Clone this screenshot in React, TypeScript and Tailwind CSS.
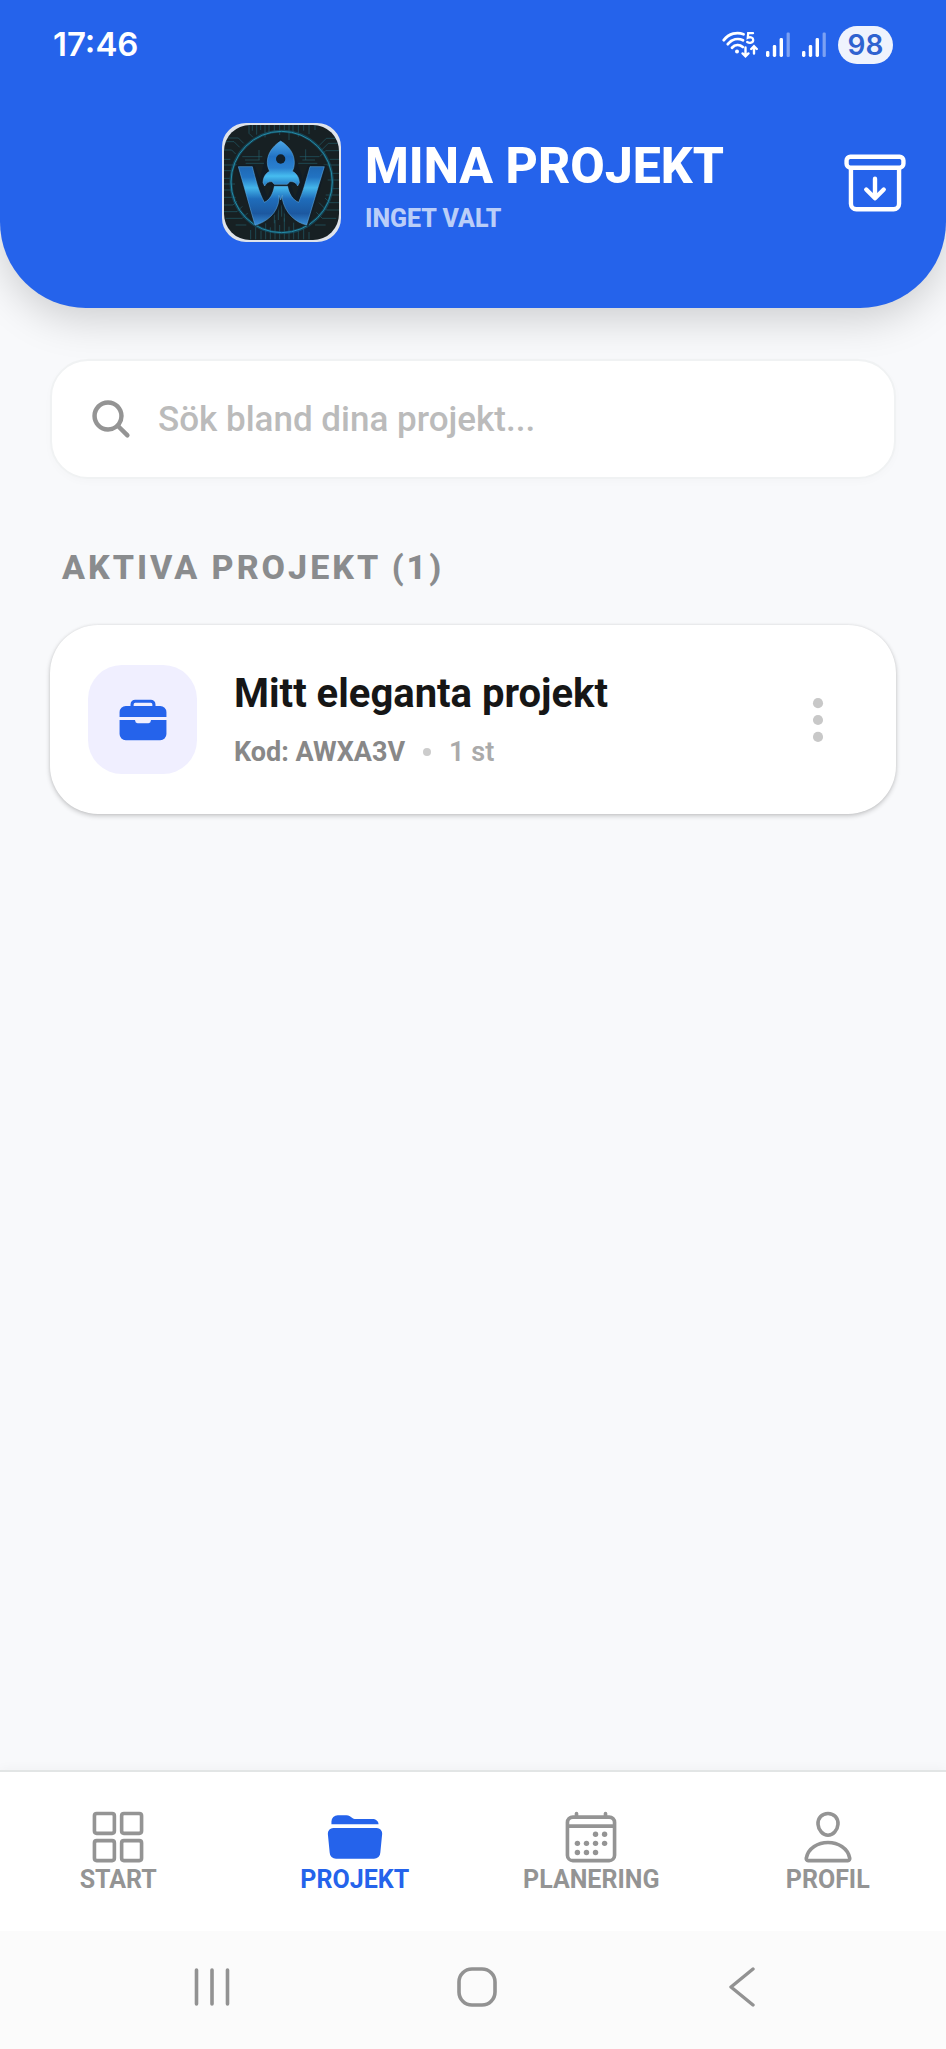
import {
  IoArchiveOutline,
  IoBriefcase,
  IoCalendarOutline,
  IoEllipsisVertical,
  IoFolderOpen,
  IoGridOutline,
  IoPersonOutline,
  IoSearch,
} from "react-icons/io5";

function WifiIcon() {
  return (
    <svg viewBox="0 0 36 28" className="h-7 w-9" fill="none" stroke="white" strokeWidth="2.8" strokeLinecap="round">
      <path d="M1.8 9.2C7 2.2 15 .8 21.5 3.2" />
      <path d="M5.8 13.2C10 8 16 7 21 9.2" />
      <path d="M10 16.8C13 13.6 17.5 13.4 20.8 16" />
      <circle cx="15" cy="20.4" r="2" fill="white" stroke="none" />
      <path d="M31 2.2H26.2L25.8 6.8C28.5 5.6 31.2 6.6 31.2 9C31.2 11.8 27.6 12.6 25.2 11" strokeWidth="2.3" />
      <path d="M23.5 16.5V25M20.6 22.4L23.5 25.3L26.4 22.4M32 22.5V15.5M29.2 18L32 15.2L34.8 18" strokeWidth="2.4" />
    </svg>
  );
}

function SignalIcon() {
  return (
    <svg viewBox="0 0 24 26" className="h-[26px] w-6" fill="white">
      <rect x="0" y="19" width="3.4" height="6" rx="1.4" />
      <rect x="6.8" y="13" width="3.4" height="12" rx="1.4" />
      <rect x="13.6" y="6" width="3.4" height="19" rx="1.4" />
      <rect x="20.6" y="0.5" width="3.2" height="24.5" rx="1.2" opacity="0.4" />
    </svg>
  );
}

const circuitLines = [
  "M120 45V70L132 82M130 45V62M143 45V74M155 45V60M168 45V82M180 45V70M196 45V62M212 45V75M226 45V60M240 45V90M252 45V68M268 45V80M284 45V62M300 45V72M318 45V60",
  "M45 95H75L92 112M58 84H88L104 100M45 120H68L80 132M45 148H64M45 165H84M45 182H70M45 205H62M45 222H78M45 240H66M45 262H80M45 285H72L84 273M45 305H84L100 289M50 325H100L116 309M80 345H112",
  "M390 85H352L330 107M390 100H358L338 120M390 122H350L332 140M390 148H362M390 165H344M390 190H368M390 210H356M390 236H366M390 255H350M390 278H362L348 264M390 300H352L330 278M382 325H340L322 307M350 345H318",
  "M125 388V360M140 388V345M156 388V362M170 388V340M184 388V352M198 388V330M212 388V345M226 388V325M240 388V350M254 388V338M268 388V358M284 388V348M300 388V366",
  "M100 140H160M108 150H152M110 160H165M272 140H330M280 150H318M268 160H325M150 120V150M290 118V150M208 290V330M218 285V320M226 292V335M196 300V340",
];

function AppLogo() {
  return (
    <div className="h-[119px] w-[119px] overflow-hidden rounded-[24px] border-2 border-[#dfe3ea] bg-[#dfe3ea]">
      <svg viewBox="45 45 345 345" className="h-full w-full rounded-[26px]" role="img" aria-label="W">
        <defs>
          <linearGradient id="arm" x1="0" y1="0" x2="0" y2="1">
            <stop offset="0" stopColor="#1e68b4" />
            <stop offset="0.18" stopColor="#2273c2" />
            <stop offset="0.36" stopColor="#43b5ea" />
            <stop offset="0.55" stopColor="#1f6dbb" />
            <stop offset="0.8" stopColor="#1c58a0" />
            <stop offset="1" stopColor="#3a8fd6" />
          </linearGradient>
          <linearGradient id="rocket" x1="0" y1="0" x2="0" y2="1">
            <stop offset="0" stopColor="#4aa6e6" />
            <stop offset="0.35" stopColor="#2272c4" />
            <stop offset="0.6" stopColor="#2a80cf" />
            <stop offset="0.78" stopColor="#46bdf0" />
            <stop offset="1" stopColor="#2173c0" />
          </linearGradient>
        </defs>
        <rect x="45" y="45" width="345" height="345" fill="#182124" />
        <g fill="none" stroke="#27798a" strokeWidth="2" opacity="0.7">
          {circuitLines.map((d) => (
            <path key={d} d={d} />
          ))}
        </g>
        <circle cx="218" cy="216" r="152" fill="none" stroke="#15536a" strokeWidth="9" opacity="0.7" />
        <circle cx="218" cy="216" r="152" fill="none" stroke="#258ba6" strokeWidth="3" />
        <path
          d="M80 165H136L176 262L188 226L155 225V195L168 150L215 85L262 150L278 195V225L246 226L258 262L298 165H354L298 350L225 310L215 280L205 310L138 350Z"
          fill="#101c26"
          opacity="0.8"
        />
        <path
          d="M88 170H130C138 202 150 248 166 277C183 270 192 251 196 229H236C240 251 251 270 269 277C281 248 293 205 303 170H346L293 345C260 338 229 310 220 268V256L215 270L210 256V268C206 310 172 336 138 346Z"
          fill="url(#arm)"
          stroke="#69b7ea"
          strokeWidth="1.5"
        />
        <path
          d="M215 93C241 109 256 132 256 157C256 168 254 176 250 184C262 190 270 200 271 218L266 228C260 216 251 214 242 215L235 223H196L189 215C180 214 172 218 167 228L162 218C163 200 170 190 182 184C178 176 175 168 175 157C175 132 190 109 215 93Z"
          fill="url(#rocket)"
          stroke="#69b7ea"
          strokeWidth="1.5"
        />
        <circle cx="215" cy="147" r="14" fill="#12202b" />
      </svg>
    </div>
  );
}

const tabs = [
  { label: "START", Icon: IoGridOutline, active: false },
  { label: "PROJEKT", Icon: IoFolderOpen, active: true },
  { label: "PLANERING", Icon: IoCalendarOutline, active: false },
  { label: "PROFIL", Icon: IoPersonOutline, active: false },
];

export default function App() {
  return (
    <div className="flex min-h-screen flex-col bg-[#f8f9fb] font-[Roboto,sans-serif]">
      <header className="rounded-b-[86px] bg-[#2563eb] pb-[66px] text-white shadow-[0_12px_40px_rgba(0,0,0,0.17)]">
        <div className="flex h-[89px] items-center justify-between px-[53px] font-[Inter,sans-serif]">
          <time className="text-[33px] font-semibold">17:46</time>
          <div className="flex items-center gap-3">
            <div className="flex items-center gap-2">
              <WifiIcon />
              <SignalIcon />
            </div>
            <SignalIcon />
            <span className="flex h-[38px] w-[55px] items-center justify-center rounded-full bg-[#eff3fd] text-[28px] font-semibold text-[#2f62d0]">
              98
            </span>
          </div>
        </div>
        <div className="mt-[34px] grid grid-cols-[1fr_auto_1fr] items-center px-9">
          <div />
          <div className="flex items-center gap-6">
            <AppLogo />
            <div className="flex flex-col gap-1 pt-2">
              <h1 className="text-[50px] leading-[60px] font-extrabold">MINA PROJEKT</h1>
              <p className="text-[25px] leading-[38px] font-extrabold text-white/70">INGET VALT</p>
            </div>
          </div>
          <button type="button" aria-label="Arkiv" className="justify-self-end">
            <IoArchiveOutline size={70} />
          </button>
        </div>
      </header>

      <main className="flex-1 px-[50px] pt-[51px]">
        <label className="flex h-[120px] items-center gap-6 rounded-[38px] border-2 border-[#f0f2f3] bg-white px-9 shadow-[0_3px_8px_rgba(0,0,0,0.02)]">
          <IoSearch size={46} className="shrink-0 text-[#949494]" />
          <input
            type="text"
            aria-label="Sök bland dina projekt"
            placeholder="Sök bland dina projekt..."
            className="w-full min-w-0 bg-transparent pt-[3px] text-[35px] font-medium text-[#1a1a1a] outline-none placeholder:text-[#bbbbbb]"
          />
        </label>

        <h2 className="mt-[66px] pl-3 text-[34px] leading-[44px] font-extrabold tracking-[3px] text-[#8a8c8e]">
          AKTIVA PROJEKT (1)
        </h2>

        <article className="mt-9 flex h-[189px] items-center rounded-[48px] bg-white pr-[51px] pl-[38px] shadow-[0_2px_5px_rgba(0,0,0,0.2),0_0_3px_rgba(0,0,0,0.08)]">
          <div className="flex h-[109px] w-[109px] shrink-0 items-center justify-center rounded-[34px] bg-[#f0efff] text-[#2563eb]">
            <IoBriefcase size={50} />
          </div>
          <div className="ml-[37px] flex min-w-0 flex-1 flex-col gap-4">
            <h3 className="text-[40px] leading-[48px] font-bold text-[#161616]">Mitt eleganta projekt</h3>
            <p className="flex items-center text-[27px] leading-[36px] font-bold text-[#888888]">
              Kod: AWXA3V
              <span className="mx-[18px] h-2 w-2 rounded-full bg-[#cccccc]" />
              <span className="font-semibold text-[#aaaaaa]">1 st</span>
            </p>
          </div>
          <button type="button" aria-label="Fler val" className="text-[#c8c8c8]">
            <IoEllipsisVertical size={54} />
          </button>
        </article>
      </main>

      <nav className="grid h-[161px] grid-cols-4 border-t-2 border-[#e2e5e5] bg-white pt-9 shadow-[0_-2px_10px_rgba(0,0,0,0.03)]">
        {tabs.map(({ label, Icon, active }) => (
          <a
            key={label}
            href="#"
            className={
              active
                ? "flex flex-col items-center text-[#2563eb]"
                : "flex flex-col items-center text-[#949494]"
            }
          >
            <Icon size={58} />
            <span className="text-[25px] leading-[28px] font-bold">{label}</span>
          </a>
        ))}
      </nav>

      <footer className="flex h-[118px] items-center justify-around bg-[#fbfbfb] pr-[72px] pb-[6px] pl-20 text-[#929292]">
        <button type="button" aria-label="Senaste">
          <svg viewBox="0 0 40 40" className="h-10 w-10" fill="none" stroke="currentColor" strokeWidth="3.6" strokeLinecap="round">
            <path d="M4.5 3V37M20 3V37M35.5 3V37" />
          </svg>
        </button>
        <button type="button" aria-label="Hem">
          <svg viewBox="0 0 40 40" className="h-10 w-10" fill="none" stroke="currentColor" strokeWidth="3.6">
            <rect x="2" y="2" width="36" height="36" rx="13" />
          </svg>
        </button>
        <button type="button" aria-label="Tillbaka">
          <svg viewBox="0 0 40 40" className="h-10 w-10" fill="none" stroke="currentColor" strokeWidth="3.4" strokeLinecap="round" strokeLinejoin="round">
            <path d="M31 2L9 20L31 38" />
          </svg>
        </button>
      </footer>
    </div>
  );
}
